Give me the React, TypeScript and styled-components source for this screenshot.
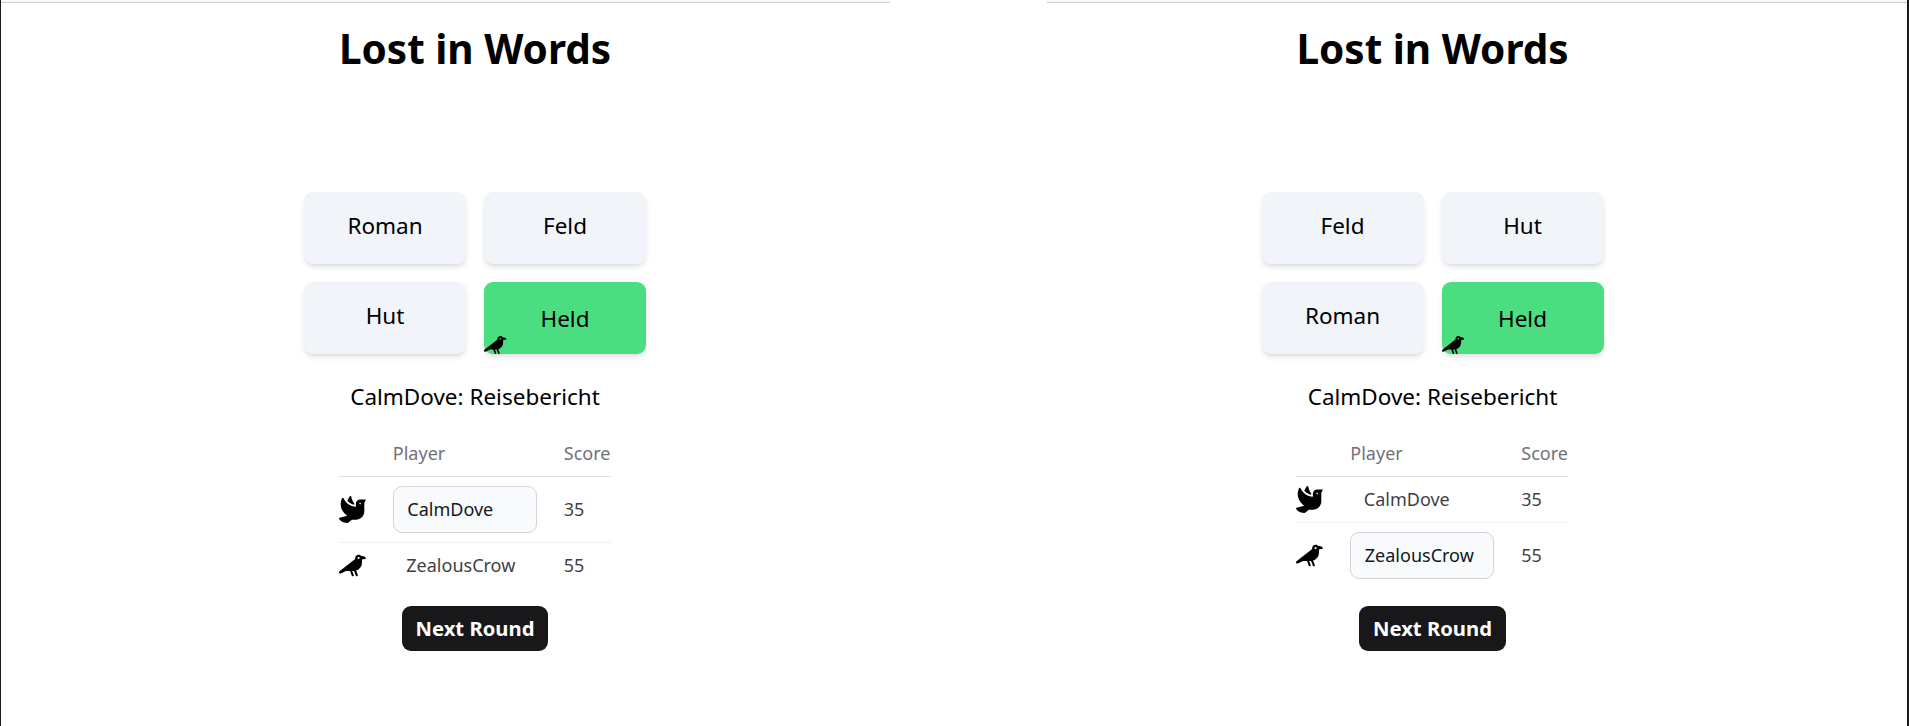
import React from "react";
import styled, { createGlobalStyle, css } from "styled-components";
import { FaCrow, FaDove } from "react-icons/fa";

const GlobalStyle = createGlobalStyle`
  *, *::before, *::after { box-sizing: border-box; }
  html { font-size: 18px; }
  body {
    margin: 0;
    background: #fff;
    color: #000;
    font-family: "Noto Sans", sans-serif;
    line-height: 1.5;
    overflow: hidden;
  }
`;

const Desktop = styled.div`
  display: flex;
  justify-content: space-between;
  height: 100vh;
  border-left: 1px solid #19191b;
  border-right: 2px solid #19191b;
`;

const Pane = styled.section<{ $width: number }>`
  display: flex;
  flex-direction: column;
  align-items: center;
  width: ${(p) => p.$width}px;
`;

const ToolbarEdge = styled.div<{ $width: number; $align: "flex-start" | "flex-end" }>`
  align-self: ${(p) => p.$align};
  width: ${(p) => p.$width}px;
  height: 3px;
  background: #f9f9fa;
  border-bottom: 1px solid #cccccc;
`;

const Title = styled.h1`
  margin: 23px 0 0;
  font-size: 2.25rem;
  font-weight: 700;
  line-height: 2.5rem;
`;

const Board = styled.div`
  display: grid;
  grid-template-columns: repeat(2, 9rem);
  grid-auto-rows: 4rem;
  gap: 1rem;
  margin-top: 121px;
`;

const Card = styled.div<{ $correct?: boolean }>`
  position: relative;
  display: flex;
  justify-content: center;
  padding-top: 18px;
  border-radius: 0.5rem;
  background: #f1f4f9;
  box-shadow: 0 4px 6px -1px rgba(0, 0, 0, 0.1), 0 2px 4px -2px rgba(0, 0, 0, 0.1);
  font-size: 1.25rem;
  line-height: 1.75rem;
  ${(p) =>
    p.$correct &&
    css`
      padding-top: 21px;
      background: #4ade80;
    `}
`;

const Votes = styled.div`
  position: absolute;
  left: 0;
  bottom: 0;
  display: flex;
  svg { display: block; width: 22.5px; height: 18px; }
`;

const Prompt = styled.p`
  margin: 27px 0 0;
  font-size: 1.25rem;
  line-height: 1.75rem;
`;

const Scores = styled.table`
  margin: 18px 0.3px 0 0;
  border-collapse: separate;
  border-spacing: 0;
  text-align: left;
  line-height: 27px;
  color: #3f3f46;
`;

const HeadCell = styled.th`
  padding: 9px 27px 9px 0;
  border-bottom: 1px solid #dfdfe2;
  color: #71717a;
  font-weight: 400;
  &:last-child { padding-right: 0.4px; }
`;

const Row = styled.tr`
  &:not(:last-child) td { border-bottom: 1px solid #f1f1f2; }
`;

const Cell = styled.td`
  padding: 9px 27px 9px 0;
  &:last-child { padding-right: 0; }
`;

const Avatar = styled.span`
  display: flex;
  align-items: center;
  width: 27px;
  height: 27px;
  color: #000;
  svg { width: 27px; height: 27px; }
`;

const PlayerName = styled.span`
  display: block;
  width: 144px;
  padding-left: 13.5px;
`;

const NameField = styled.input`
  display: block;
  width: 144px;
  height: 47px;
  padding: 0 13.5px;
  border: 1px solid #d1d5db;
  border-radius: 9px;
  background: #f9fafb;
  color: #111827;
  font: inherit;
`;

const NextButton = styled.button`
  height: 45px;
  margin-top: 18px;
  padding: 0 13.7px;
  border: 0;
  border-radius: 9px;
  background: #18181b;
  color: #fff;
  font: 700 1.125rem "Noto Sans", sans-serif;
`;

const players = [
  { name: "CalmDove", score: 35, Icon: FaDove },
  { name: "ZealousCrow", score: 55, Icon: FaCrow },
];

interface GameProps {
  words: string[];
  self: string;
  width: number;
  edgeWidth: number;
  edgeAlign: "flex-start" | "flex-end";
}

function Game({ words, self, width, edgeWidth, edgeAlign }: GameProps) {
  return (
    <Pane $width={width}>
      <ToolbarEdge $width={edgeWidth} $align={edgeAlign} />
      <Title>Lost in Words</Title>
      <Board>
        {words.map((word) => (
          <Card key={word} $correct={word === "Held"}>
            {word}
            {word === "Held" && (
              <Votes>
                <FaCrow />
              </Votes>
            )}
          </Card>
        ))}
      </Board>
      <Prompt>CalmDove: Reisebericht</Prompt>
      <Scores>
        <thead>
          <tr>
            <HeadCell />
            <HeadCell>Player</HeadCell>
            <HeadCell>Score</HeadCell>
          </tr>
        </thead>
        <tbody>
          {players.map(({ name, score, Icon }) => (
            <Row key={name}>
              <Cell>
                <Avatar>
                  <Icon />
                </Avatar>
              </Cell>
              <Cell>
                {name === self ? <NameField defaultValue={name} /> : <PlayerName>{name}</PlayerName>}
              </Cell>
              <Cell>{score}</Cell>
            </Row>
          ))}
        </tbody>
      </Scores>
      <NextButton>Next Round</NextButton>
    </Pane>
  );
}

export default function App() {
  return (
    <>
      <GlobalStyle />
      <Desktop>
        <Game words={["Roman", "Feld", "Hut", "Held"]} self="CalmDove" width={948} edgeWidth={889} edgeAlign="flex-start" />
        <Game words={["Feld", "Hut", "Roman", "Held"]} self="ZealousCrow" width={949} edgeWidth={860} edgeAlign="flex-end" />
      </Desktop>
    </>
  );
}
